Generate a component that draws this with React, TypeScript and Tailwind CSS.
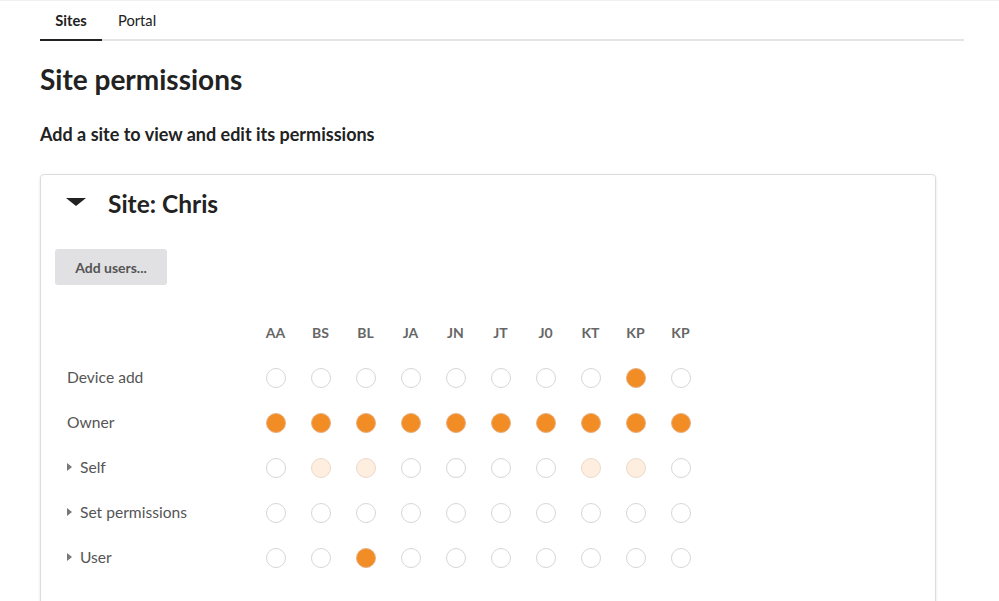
const users = ["AA", "BS", "BL", "JA", "JN", "JT", "J0", "KT", "KP", "KP"];

type Cell = "off" | "on" | "part";

const rows: { label: string; expandable: boolean; cells: Cell[] }[] = [
  {
    label: "Device add",
    expandable: false,
    cells: ["off", "off", "off", "off", "off", "off", "off", "off", "on", "off"],
  },
  {
    label: "Owner",
    expandable: false,
    cells: ["on", "on", "on", "on", "on", "on", "on", "on", "on", "on"],
  },
  {
    label: "Self",
    expandable: true,
    cells: ["off", "part", "part", "off", "off", "off", "off", "part", "part", "off"],
  },
  {
    label: "Set permissions",
    expandable: true,
    cells: ["off", "off", "off", "off", "off", "off", "off", "off", "off", "off"],
  },
  {
    label: "User",
    expandable: true,
    cells: ["off", "off", "on", "off", "off", "off", "off", "off", "off", "off"],
  },
];

function Dot({ state }: { state: Cell }) {
  if (state === "on") {
    return <span className="block h-5 w-5 rounded-full border border-[#e6b183] bg-[#f28c24]" />;
  }
  if (state === "part") {
    return <span className="block h-5 w-5 rounded-full border border-[#eadbcb] bg-[#fdeee0]" />;
  }
  return <span className="block h-5 w-5 rounded-full border border-[#d6d6d6] bg-white" />;
}

export default function App() {
  return (
    <div className="min-h-[601px] border-t border-[#f0f0f0] bg-white font-['Lato',sans-serif] text-[#222]">
      <div className="w-[964px] pl-10">
        <div className="flex h-[40px] border-b-2 border-[#e4e4e4]">
          <div className="-mb-[2px] flex w-[62px] items-center justify-center border-b-2 border-[#222] text-[14.7px] font-bold">
            Sites
          </div>
          <div className="flex items-center px-4 text-[14.7px]">Portal</div>
        </div>

        <h1 className="mt-[20px] text-[28px] leading-[36px] font-bold">Site permissions</h1>
        <h2 className="mt-[25px] text-[18px] leading-6 font-bold">
          Add a site to view and edit its permissions
        </h2>

        <div className="mt-[28px] w-[896px] rounded border border-[#dcdcdc] px-[14px] pt-[14px] pb-6 shadow-sm">
          <div className="flex h-[30px] items-center">
            <svg width="20" height="8" viewBox="0 0 20 8" className="ml-[11px] mt-[-4px]">
              <polygon points="0,0 20,0 10,8" fill="#222" />
            </svg>
            <span className="ml-[22px] text-[24.5px] font-bold">Site: Chris</span>
          </div>

          <button className="mt-[30px] h-9 w-[112px] rounded-[3px] bg-[#e1e1e3] text-[14px] font-bold text-[#555]">
            Add users...
          </button>

          <div className="mt-[25px] grid grid-cols-[198px_repeat(10,45px)] auto-rows-[45px] items-center">
            <div />
            {users.map((u, i) => (
              <div key={i} className="text-center text-[14px] font-bold text-[#666]">
                {u}
              </div>
            ))}
            {rows.map((r) => (
              <>
                <div key={r.label} className="flex items-center pl-3 text-[15.6px] text-[#555]">
                  {r.expandable && (
                    <svg width="5" height="8" viewBox="0 0 5 8" className="mr-[8px]">
                      <polygon points="0,0 5,4 0,8" fill="#777" />
                    </svg>
                  )}
                  {r.label}
                </div>
                {r.cells.map((c, j) => (
                  <div key={r.label + j} className="flex justify-center">
                    <Dot state={c} />
                  </div>
                ))}
              </>
            ))}
          </div>
        </div>
      </div>
    </div>
  );
}
